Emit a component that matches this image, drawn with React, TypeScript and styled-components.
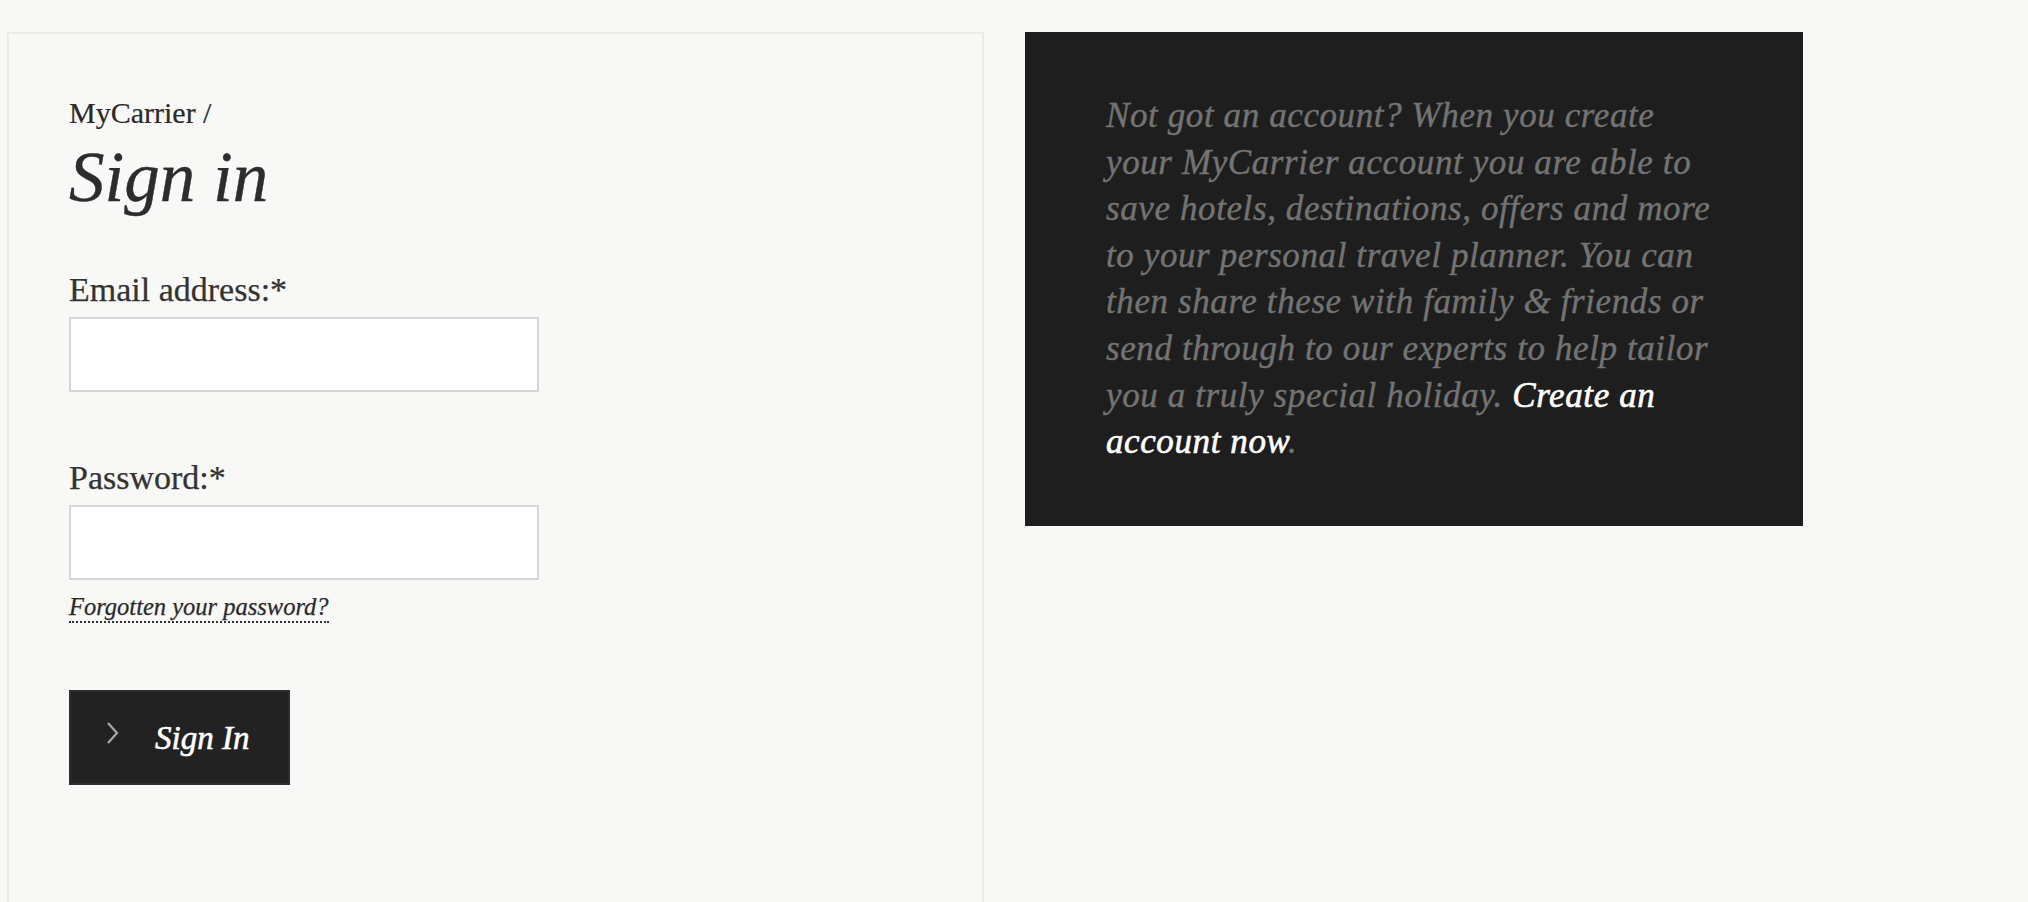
import React from "react";
import styled, { createGlobalStyle } from "styled-components";

const GlobalStyle = createGlobalStyle`
  html, body {
    margin: 0;
    padding: 0;
    background: #f8f8f6;
  }
  body {
    font-family: "Liberation Serif", "Times New Roman", serif;
    color: #2e2e2e;
  }
  * { box-sizing: border-box; }
`;

const Page = styled.div`
  display: flex;
  align-items: flex-start;
  gap: 41px;
  padding: 32px 0 0 7px;
  overflow: hidden;
  height: 902px;
`;

const LoginPanel = styled.section`
  width: 977px;
  min-height: 940px;
  border: 2px solid #ebebe9;
  background: #f8f8f6;
  padding: 61px 0 0 60px;
  display: flex;
  flex-direction: column;
  align-items: flex-start;
`;

const Breadcrumb = styled.div`
  font-size: 30px;
  line-height: 36px;
  color: #2a2a2a;
  -webkit-text-stroke: 0.2px #2a2a2a;
`;

const Title = styled.h1`
  margin: 6px 0 0;
  font-size: 71px;
  line-height: 80px;
  font-style: italic;
  font-weight: normal;
  color: #2c2c2c;
  -webkit-text-stroke: 0.4px #2c2c2c;
`;

const Field = styled.div<{ $top: number }>`
  display: flex;
  flex-direction: column;
  margin-top: ${(p) => p.$top}px;
`;

const Label = styled.label`
  font-size: 34px;
  line-height: 40px;
  color: #333;
  margin-bottom: 7px;
  -webkit-text-stroke: 0.25px #333;
`;

const Input = styled.input`
  width: 470px;
  height: 75px;
  border: 2px solid #d6d6d6;
  background: #fff;
  outline: none;
  font-size: 28px;
  padding: 0 16px;
  font-family: inherit;
`;

const ForgotLink = styled.a`
  display: inline-block;
  margin-top: 13px;
  font-size: 24.5px;
  line-height: 28px;
  font-style: italic;
  color: #2a2a2a;
  text-decoration: none;
  border-bottom: 2px dotted #333;
  cursor: pointer;
  -webkit-text-stroke: 0.25px #2a2a2a;
`;

const SignInButton = styled.button`
  margin-top: 67px;
  width: 221px;
  height: 95px;
  background: #222;
  border: 2px solid #2f2f2f;
  display: flex;
  align-items: center;
  padding: 0 0 0 34px;
  gap: 34px;
  cursor: pointer;
  font-family: inherit;
`;

const ButtonLabel = styled.span`
  font-size: 33px;
  font-style: italic;
  color: #fff;
  line-height: 40px;
  -webkit-text-stroke: 0.6px #fff;
`;

const Chevron = styled.svg`
  width: 16px;
  height: 24px;
  flex: none;
  margin-top: -10px;
`;

const PromoBox = styled.aside`
  width: 778px;
  height: 494px;
  background: #1e1e1e;
  padding: 61px 40px 0 81px;
`;

const PromoText = styled.p`
  margin: 0;
  font-size: 35px;
  line-height: 46.6px;
  font-style: italic;
  color: #737373;
  white-space: nowrap;
  letter-spacing: 0.6px;
  -webkit-text-stroke: 0.4px #737373;
`;

const PromoLink = styled.a`
  color: #fff;
  text-decoration: none;
  cursor: pointer;
  -webkit-text-stroke: 0.6px #fff;
`;

export default function App() {
  return (
    <>
      <GlobalStyle />
      <Page>
        <LoginPanel>
          <Breadcrumb>MyCarrier /</Breadcrumb>
          <Title>Sign in</Title>
          <Field $top={53}>
            <Label htmlFor="email">Email address:*</Label>
            <Input id="email" type="email" />
          </Field>
          <Field $top={66}>
            <Label htmlFor="password">Password:*</Label>
            <Input id="password" type="password" />
          </Field>
          <ForgotLink>Forgotten your password?</ForgotLink>
          <SignInButton type="button">
            <Chevron viewBox="0 0 16 24">
              <path d="M3 2 L12 12 L3 22" fill="none" stroke="#a8a8a8" strokeWidth="2.2" />
            </Chevron>
            <ButtonLabel>Sign In</ButtonLabel>
          </SignInButton>
        </LoginPanel>
        <PromoBox>
          <PromoText>
            Not got an account? When you create
            <br />
            your MyCarrier account you are able to
            <br />
            save hotels, destinations, offers and more
            <br />
            to your personal travel planner. You can
            <br />
            then share these with family &amp; friends or
            <br />
            send through to our experts to help tailor
            <br />
            you a truly special holiday. <PromoLink>Create an</PromoLink>
            <br />
            <PromoLink>account now</PromoLink>.
          </PromoText>
        </PromoBox>
      </Page>
    </>
  );
}
